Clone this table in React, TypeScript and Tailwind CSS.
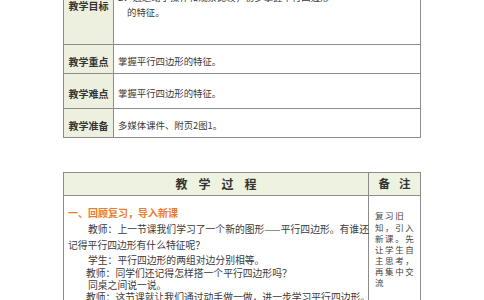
const labelCls =
  "w-[50px] shrink-0 bg-[#eef0df] border-r border-[#8c8c8c] flex items-center justify-center text-[10px] font-bold text-[#333]";

function InfoRow({ label, text, h, last }: { label: string; text: string; h: string; last?: boolean }) {
  return (
    <div className={`flex ${h} ${last ? "" : "border-b border-[#8c8c8c]"}`}>
      <div className={`${labelCls} pt-[5px]`}>{label}</div>
      <div className="flex-1 flex items-center pl-[4px] pt-[5px] text-[9.4px] text-[#3a3a3a]">{text}</div>
    </div>
  );
}

const lines: { text: string; h: string; pl: string }[] = [
  { text: "教师：上一节课我们学习了一个新的图形——平行四边形。有谁还", h: "h-[16px] leading-[16px]", pl: "pl-[24px]" },
  { text: "记得平行四边形有什么特征呢？", h: "h-[16px] leading-[16px]", pl: "pl-[4px]" },
  { text: "学生：平行四边形的两组对边分别相等。", h: "h-[14px] leading-[14px]", pl: "pl-[24px]" },
  { text: "教师：同学们还记得怎样搭一个平行四边形吗？", h: "h-[13px] leading-[13px]", pl: "pl-[22px]" },
  { text: "同桌之间说一说。", h: "h-[11px] leading-[11px]", pl: "pl-[24px]" },
  { text: "教师：这节课就让我们通过动手做一做，进一步学习平行四边形。", h: "h-[12px] leading-[12px]", pl: "pl-[22px]" },
];

const notes = ["复习旧", "知，引入", "新课。先", "让学生自", "主思考，", "再集中交", "流"];

export default function App() {
  return (
    <div className="w-[484px] h-[300px] overflow-hidden bg-white font-['Noto_Sans_CJK_SC',sans-serif]">
      {/* upper table */}
      <div className="ml-[63px] w-[358px] mt-[-34px] border border-[#8c8c8c]">
        <div className="flex h-[78px] border-b border-[#8c8c8c]">
          <div className={`${labelCls}`}>教学目标</div>
          <div className="flex-1 pt-[8px] pl-[4px] text-[9.4px] leading-[15px] text-[#3a3a3a]">
            <div>1．经历观察、比较、操作等活动，认识平行四边形，</div>
            <div>2．通过动手操作和观察比较，初步掌握平行四边形</div>
            <div className="pl-[9px]">的特征。</div>
          </div>
        </div>
        <InfoRow label="教学重点" text="掌握平行四边形的特征。" h="h-[29px]" />
        <InfoRow label="教学难点" text="掌握平行四边形的特征。" h="h-[35px]" />
        <InfoRow label="教学准备" text="多媒体课件、附页2图1。" h="h-[28px]" last />
      </div>

      {/* lesson process table */}
      <div className="ml-[63px] w-[358px] mt-[34px] border border-[#8c8c8c] h-[200px]">
        <div className="flex h-[23px] bg-[#eef2e0] border-b border-[#8c8c8c] text-[12px] font-bold text-[#333]">
          <div className="w-[305px] border-r border-[#8c8c8c] flex items-center justify-center tracking-[11px] pl-[11px]">
            教学过程
          </div>
          <div className="flex-1 flex items-center justify-center tracking-[9px] pl-[9px] text-[11.5px]">备注</div>
        </div>
        <div className="flex h-full">
          <div className="w-[305px] border-r border-[#8c8c8c] pt-[9px] text-[9.8px] text-[#3a3a3a] whitespace-nowrap">
            <div className="h-[16px] leading-[16px] pl-[4px] text-[10px] font-bold text-[#e97d2f]">一、回顾复习，导入新课</div>
            {lines.map((l, i) => (
              <div key={i} className={`${l.h} ${l.pl}`}>
                {l.text}
              </div>
            ))}
          </div>
          <div className="flex-1 pt-[13px] pl-[6px] text-[8.5px] tracking-[1.6px] text-[#444]">
            {notes.map((n, i) => (
              <div key={i} className={i === 0 ? "h-[13px] leading-[13px]" : "h-[11px] leading-[11px]"}>
                {n}
              </div>
            ))}
          </div>
        </div>
      </div>
    </div>
  );
}
